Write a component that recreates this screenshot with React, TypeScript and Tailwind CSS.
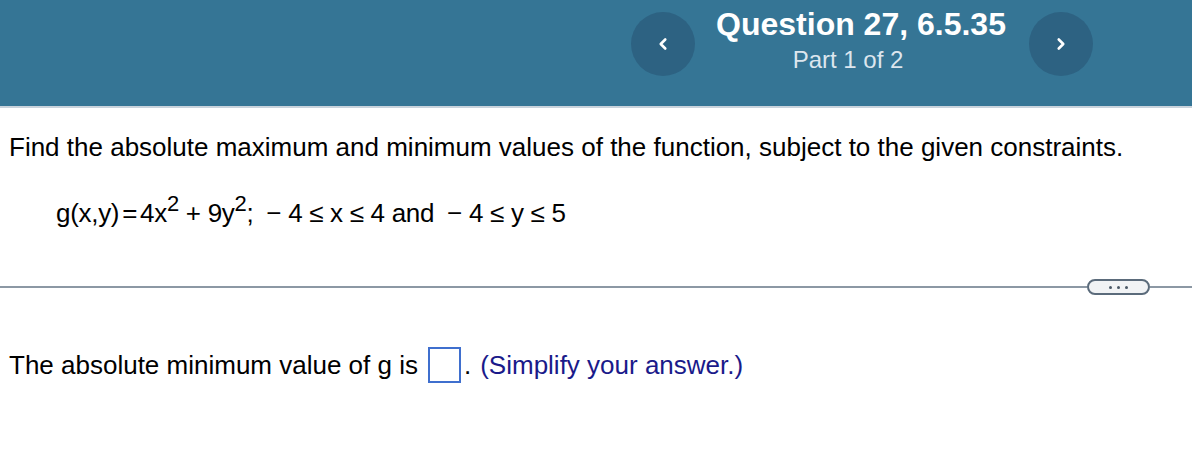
import { ChevronLeft, ChevronRight } from 'lucide-react'

function NavButton({ dir }: { dir: 'prev' | 'next' }) {
  return (
    <button className="flex h-16 w-16 items-center justify-center rounded-full bg-[#2d6282] text-white">
      {dir === 'prev' ? <ChevronLeft size={18} strokeWidth={3.5} /> : <ChevronRight size={18} strokeWidth={3.5} />}
    </button>
  )
}

const sup = 'top-[-11px] text-[22px] leading-none'

export default function App() {
  return (
    <div className="h-[460px] w-[1192px] overflow-hidden bg-white font-['Liberation_Sans',Arial,sans-serif] text-black">
      <header className="h-[108px] border-b-2 border-[#c9d3dc] bg-[#357595]">
        <div className="flex items-start pt-3 pl-[631px]">
          <NavButton dir="prev" />
          <div className="flex w-[334px] flex-col items-center">
            <h1 className="mt-[-8px] ml-[-2px] text-[32px] leading-[40px] font-bold text-white">Question 27, 6.5.35</h1>
            <p className="mt-[2px] ml-[-28px] text-[24px] leading-[28px] text-[#dde6ee]">Part 1 of 2</p>
          </div>
          <NavButton dir="next" />
        </div>
      </header>

      <main>
        <p className="mt-[24px] pl-[9px] text-[26px] leading-[30px]">
          Find the absolute maximum and minimum values of the function, subject to the given constraints.
        </p>
        <p className="mt-[36px] pl-[56px] text-[26px] leading-[30px] tracking-[-0.3px]">
          g(x,y)<span className="mx-[3px]">=</span>4x<sup className={sup}>2</sup> + 9y<sup className={sup}>2</sup>;{' '}
          <span className="ml-[6px]">−</span> 4 ≤ x ≤ 4 and <span className="ml-[6px]">−</span> 4 ≤ y ≤ 5
        </p>

        <div className="mt-[51px] flex items-center">
          <div className="h-[2px] flex-1 bg-[#8c98a4]" />
          <button className="flex h-[16px] w-[63px] items-center justify-center gap-[5px] rounded-full border-2 border-[#5b6b7b] bg-[#f1f3f5]">
            <span className="h-[3px] w-[3px] rounded-full bg-[#4a5866]" />
            <span className="h-[3px] w-[3px] rounded-full bg-[#4a5866]" />
            <span className="h-[3px] w-[3px] rounded-full bg-[#4a5866]" />
          </button>
          <div className="h-[2px] w-[42px] bg-[#8c98a4]" />
        </div>

        <div className="mt-[52px] flex items-center pl-[9px] text-[26px] leading-[30px]">
          <span>The absolute minimum value of g is</span>
          <span className="ml-[10px] inline-block h-[36px] w-[33px] border-2 border-[#3f6fce]" />
          <span className="ml-[3px]">.</span>
          <span className="ml-[9px] text-[#1a1a8a]">(Simplify your answer.)</span>
        </div>
      </main>
    </div>
  )
}
